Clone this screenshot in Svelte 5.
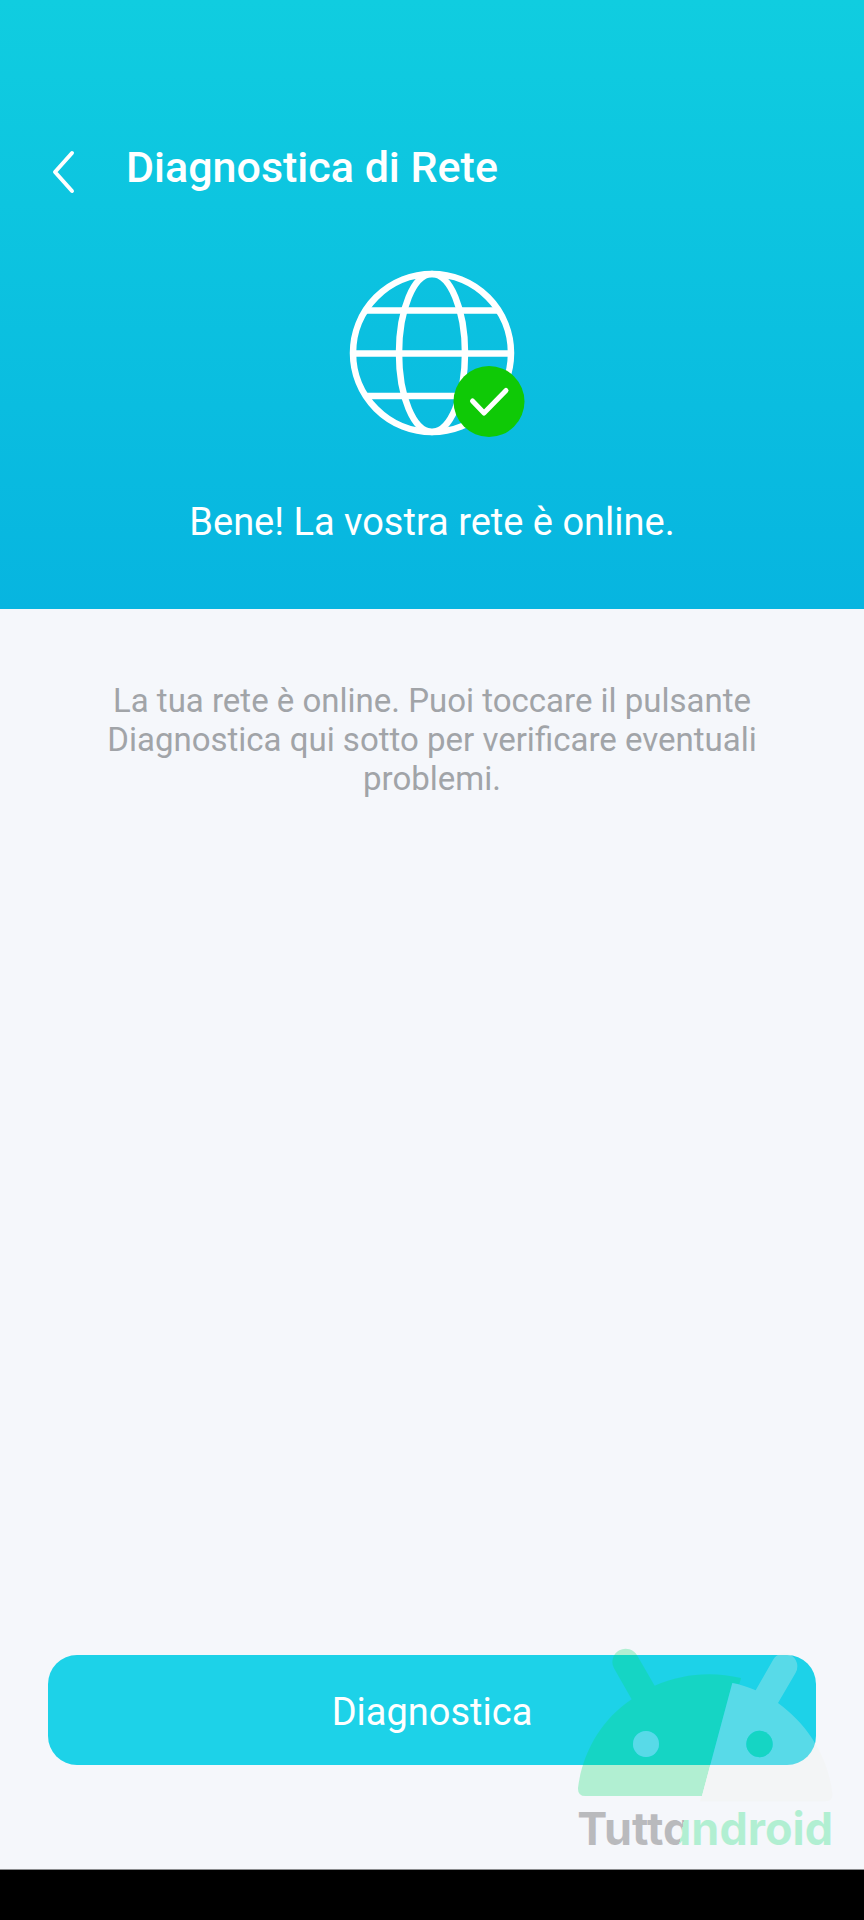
<script>
    export let title = 'Diagnostica di Rete'
    export let status = 'Bene! La vostra rete è online.'
    export let hint = 'La tua rete è online. Puoi toccare il pulsante Diagnostica qui sotto per verificare eventuali problemi.'
</script>

<div class="page">
    <header>
        <div class="bar">
            <button class="back" type="button" aria-label="Indietro">
                <svg width="24" height="46" viewBox="0 0 24 46">
                    <path d="M20 4 3 23l17 19" />
                </svg>
            </button>
            <h1>{title}</h1>
        </div>
        <svg class="globe" width="176" height="168" viewBox="0 0 176 168">
            <g class="lines">
                <circle cx="83" cy="83" r="79" />
                <ellipse cx="83" cy="83" rx="33" ry="79" />
                <path d="M18 40.500h130M4 83.500h158M18 126h130" />
            </g>
            <circle class="badge" cx="140" cy="131.500" r="35.500" />
            <path class="check" d="M123.500 131l11.500 12 22-22.500" />
        </svg>
        <p class="status">{status}</p>
    </header>

    <main>
        <p class="hint">{hint}</p>
        <button class="run" type="button">Diagnostica</button>

        <svg class="watermark" width="260" height="214" viewBox="50 50 780 642">
            <defs>
                <linearGradient id="split" gradientUnits="userSpaceOnUse" x1="353" y1="604" x2="373" y2="608">
                    <stop offset="0.5" stop-color="#202020" />
                    <stop offset="0.5" stop-color="#04de6b" />
                </linearGradient>
            </defs>
            <path
                class="green"
                fill-rule="evenodd"
                d="M75 497Q52 497 53 473C66 370 120 270 214 207L161 114A39 39 0 0 1 231 76L283 166C365 130 455 122 542 143L537 162 516 158 425 497ZM218 341a39 39 0 1 0 78 0a39 39 0 1 0-78 0Z"
            />
            <path
                class="pale"
                fill-rule="evenodd"
                d="M516 158C540 162 563 170 586 180L638 89A38 38 0 0 1 706 127L653 218C745 285 803 380 816 490Q818 513 794 513H419L425 497ZM558 341a39.500 39.500 0 1 0 79 0a39.500 39.500 0 1 0-79 0Z"
            />
            <circle class="pale" cx="257" cy="341" r="39" />
            <circle class="green" cx="597.500" cy="341" r="39.500" />
            <text x="51" y="643" fill="url(#split)">Tuttandroid</text>
        </svg>
    </main>

    <div class="nav"></div>
</div>

<style>
    :global(body) {
        background-color: #f5f7fb;
        font-family: Roboto, "Liberation Sans", sans-serif;
    }

    .page {
        display: flex;
        flex-direction: column;
        min-height: 100vh;
    }

    header {
        align-items: center;
        background: linear-gradient(#10cde0, #07b5e0);
        color: #fff;
        display: flex;
        flex-direction: column;
        padding: 140px 48px 64px;
    }

    .bar {
        align-items: flex-start;
        align-self: stretch;
        display: flex;
        gap: 50px;
    }

    .back {
        background: none;
        border: 0;
        cursor: pointer;
        padding: 9px 0 0 4px;
    }

    .back svg {
        display: block;
    }

    .back path {
        fill: none;
        stroke: #fff;
        stroke-linecap: round;
        stroke-linejoin: round;
        stroke-width: 4;
    }

    h1 {
        font-size: 43px;
        font-weight: 500;
        line-height: 54px;
        margin: 0;
    }

    .globe {
        margin: 75px 0 0 10px;
    }

    .lines {
        fill: none;
        stroke: #fff;
        stroke-width: 6.5;
    }

    .badge {
        fill: #0fc906;
    }

    .check {
        fill: none;
        stroke: #fff;
        stroke-linecap: round;
        stroke-linejoin: round;
        stroke-width: 5;
    }

    .status {
        font-size: 38px;
        line-height: 46px;
        margin: 61px 0 0;
    }

    main {
        align-items: center;
        display: flex;
        flex: 1;
        flex-direction: column;
        justify-content: space-between;
        padding: 72px 48px 104px;
        position: relative;
    }

    .hint {
        color: #a1a4a8;
        font-size: 33px;
        line-height: 39px;
        margin: 0;
        max-width: 680px;
        text-align: center;
    }

    .run {
        align-self: stretch;
        background-color: #1dd2e8;
        border: 0;
        border-radius: 29px;
        color: #fff;
        cursor: pointer;
        font-family: inherit;
        font-size: 38px;
        line-height: 46px;
        padding: 34px 32px 30px;
    }

    .watermark {
        bottom: 8px;
        opacity: .28;
        pointer-events: none;
        position: absolute;
        right: 27px;
    }

    .watermark text {
        font-family: Inter, sans-serif;
        font-feature-settings: "cv11";
        font-size: 135px;
        font-weight: 700;
    }

    .green {
        fill: #04de6b;
    }

    .pale {
        fill: #f1f1ea;
    }

    .nav {
        background-color: #000;
        border-top: 1px solid #8a8c8e;
        height: 50px;
    }
</style>
